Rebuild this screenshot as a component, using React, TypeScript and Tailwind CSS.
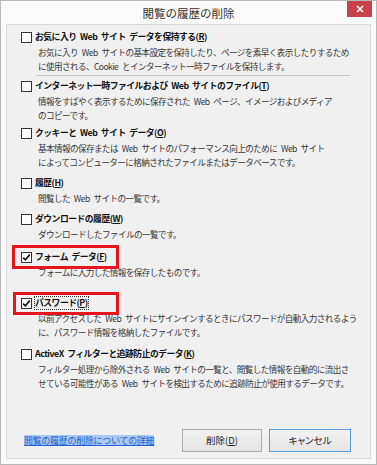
import React from "react";

const FONT = {
  fontFamily: '"Noto Sans CJK JP", "Noto Sans", sans-serif',
};

function Check({ checked }: { checked?: boolean }) {
  return (
    <div className="w-[11px] h-[11px] shrink-0 border border-[#333] bg-white flex items-center justify-center">
      {checked && (
        <svg width="9" height="9" viewBox="0 0 9 9">
          <path d="M1.2 4.6 L3.4 6.8 L7.8 1.6" stroke="#111" strokeWidth="1.7" fill="none" />
        </svg>
      )}
    </div>
  );
}

function Item({
  label,
  keyChar,
  lines,
  checked,
  className,
  focus,
  children,
}: {
  label: string;
  keyChar: string;
  lines: string[];
  checked?: boolean;
  className?: string;
  focus?: boolean;
  children?: React.ReactNode;
}) {
  return (
    <div className={"relative " + (className ?? "")}>
      {children}
      <div className="flex items-center h-[16px]">
        <Check checked={checked} />
        <span
          className={
            "ml-[3px] font-bold text-[8.8px] tracking-[-0.5px] [word-spacing:2px] leading-[12px] text-[#111] whitespace-nowrap " +
            (focus ? "outline outline-1 outline-dotted outline-[#333]" : "")
          }
        >
          {label}(<u>{keyChar}</u>)
        </span>
      </div>
      <div className="pl-[17px] text-[8.6px] tracking-[-0.6px] [word-spacing:2.5px] leading-[14px] text-[#363636] whitespace-nowrap">
        {lines.map((l, i) => (
          <div key={i}>{l}</div>
        ))}
      </div>
    </div>
  );
}

export default function App() {
  return (
    <div
      className="w-[377px] h-[465px] bg-[#fafafa] border border-[#b8b8b8] flex flex-col overflow-hidden"
      style={FONT}
    >
      <div className="h-[23px] relative flex items-center justify-center shrink-0">
        <span className="text-[11.5px] text-[#333] mt-[2px]">閲覧の履歴の削除</span>
        <div className="absolute right-[4px] top-[-1px] w-[25px] h-[17px] bg-[#c7434a] flex items-center justify-center">
          <svg width="8" height="8" viewBox="0 0 8 8">
            <path d="M1 1 L7 7 M7 1 L1 7" stroke="#fff" strokeWidth="1.6" />
          </svg>
        </div>
      </div>
      <div className="mx-[5px] mb-[5px] flex-1 bg-[#f0f0f0] border border-[#d9d9d9] flex flex-col pl-[14px] pt-[4px]">
        <Item
          label="お気に入り Web サイト データを保持する"
          keyChar="R"
          lines={[
            "お気に入り Web サイトの基本設定を保持したり、ページを素早く表示したりするため",
            "に使用される、Cookie とインターネット一時ファイルを保持します。",
          ]}
        />
        <div className="ml-[15px] w-[314px] h-px bg-[#c8c8c8] mt-[2px] mb-[2px]" />
        <Item
          label="インターネット一時ファイルおよび Web サイトのファイル"
          keyChar="T"
          lines={[
            "情報をすばやく表示するために保存された Web ページ、イメージおよびメディア",
            "のコピーです。",
          ]}
        />
        <Item
          className="mt-[3px]"
          label="クッキーと Web サイト データ"
          keyChar="O"
          lines={[
            "基本情報の保存または Web サイトのパフォーマンス向上のために Web サイト",
            "によってコンピューターに格納されたファイルまたはデータベースです。",
          ]}
        />
        <Item className="mt-[6px]" label="履歴" keyChar="H" lines={["閲覧した Web サイトの一覧です。"]} />
        <Item
          className="mt-[6px]"
          label="ダウンロードの履歴"
          keyChar="W"
          lines={["ダウンロードしたファイルの一覧です。"]}
        />
        <Item
          className="mt-[8px]"
          label="フォーム データ"
          keyChar="F"
          checked
          lines={["フォームに入力した情報を保存したものです。"]}
        >
          <div className="absolute left-[-9px] top-[-4px] w-[107px] h-[24px] border-[3px] border-[#e8141c]" />
        </Item>
        <Item
          className="mt-[16px]"
          label="パスワード"
          keyChar="P"
          checked
          focus
          lines={[
            "以前アクセスした Web サイトにサインインするときにパスワードが自動入力されるよう",
            "に、パスワード情報を格納したファイルです。",
          ]}
        >
          <div className="absolute left-[-8px] top-[-3px] w-[106px] h-[23px] border-[3px] border-[#e8141c]" />
        </Item>
        <Item
          className="mt-[7px]"
          label="ActiveX フィルターと追跡防止のデータ"
          keyChar="K"
          lines={[
            "フィルター処理から除外される Web サイトの一覧と、閲覧した情報を自動的に流出さ",
            "せている可能性がある Web サイトを検出するために追跡防止が使用するデータです。",
          ]}
        />
        <div className="mt-auto mb-[6px] flex items-center pr-[19px]">
          <span className="ml-[3px] text-[9px] tracking-[-0.3px] leading-[11px] text-[#1f5fd0] underline bg-[#a9c9f2] whitespace-nowrap">
            閲覧の履歴の削除についての詳細
          </span>
          <div className="ml-auto flex gap-[7px]">
            <button className="w-[80px] h-[23px] border border-[#acacac] bg-gradient-to-b from-[#f2f2f2] to-[#e3e3e3] text-[9.5px] text-[#222]">
              削除(<u>D</u>)
            </button>
            <button className="w-[82px] h-[23px] border border-[#4f9de2] bg-gradient-to-b from-[#f2f2f2] to-[#e5e5e5] text-[9.5px] text-[#222] [font-feature-settings:'palt']">
              キャンセル
            </button>
          </div>
        </div>
      </div>
    </div>
  );
}
